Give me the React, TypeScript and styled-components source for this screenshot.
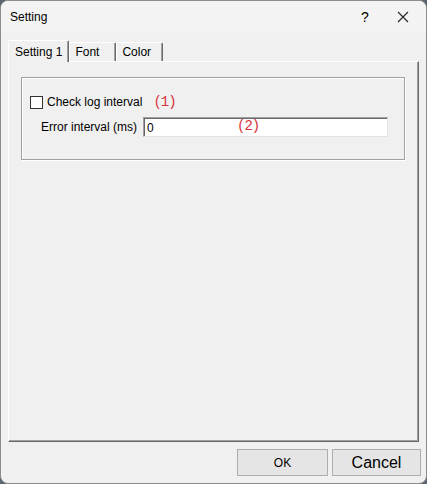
import styled, { createGlobalStyle } from 'styled-components'

const GlobalStyle = createGlobalStyle`
  html, body {
    margin: 0;
    padding: 0;
    background: #5c6470;
  }
  body {
    font-family: "Liberation Sans", Arial, sans-serif;
    font-size: 12px;
    color: #000;
  }
`

const Window = styled.div`
  box-sizing: border-box;
  width: 427px;
  height: 484px;
  border: 1px solid #8c8c8c;
  border-radius: 8px;
  background: #f0f0f0;
  display: flex;
  flex-direction: column;
  overflow: hidden;
`

const TitleBar = styled.div`
  height: 31px;
  display: flex;
  align-items: center;
  padding-left: 9px;
  background: #f3f3f3;
`

const Title = styled.div`
  flex: 1;
  font-size: 12px;
`

const TitleButton = styled.div<{ $w: number }>`
  width: ${p => p.$w}px;
  height: 31px;
  display: flex;
  align-items: center;
  justify-content: center;
  font-size: 14px;
`

const TabsRow = styled.div`
  margin: 8px 0 0 7px;
  height: 21px;
  display: flex;
  align-items: flex-end;
  position: relative;
  z-index: 1;
`

const Tab = styled.div<{ $active?: boolean }>`
  box-sizing: border-box;
  height: ${p => (p.$active ? 22 : 19)}px;
  margin-bottom: ${p => (p.$active ? -1 : 0)}px;
  padding: 0 ${p => (p.$active ? 6 : 5)}px;
  min-width: ${p => (p.$active ? 61 : 47)}px;
  display: flex;
  align-items: center;
  background: #f0f0f0;
  border-top: 1px solid #fff;
  border-left: 1px solid #fff;
  border-right: 1px solid #696969;
  border-radius: 2px 2px 0 0;
  box-shadow: inset -1px 0 0 #a0a0a0;
  font-size: 12px;
`

const Panel = styled.div`
  box-sizing: border-box;
  margin-left: 7px;
  width: 411px;
  height: 381px;
  padding: 15px 0 0 12px;
  border-top: 1px solid #fff;
  border-left: 1px solid #fff;
  border-right: 1px solid #696969;
  border-bottom: 1px solid #696969;
  box-shadow: inset -1px -1px 0 #a0a0a0;
`

const GroupBox = styled.div`
  box-sizing: border-box;
  width: 384px;
  height: 83px;
  border: 1px solid #a0a0a0;
  box-shadow: 1px 1px 0 #fff, inset 1px 1px 0 #fff;
  padding: 16px 0 0 8px;
`

const Row = styled.div<{ $indent?: number; $top?: number }>`
  display: flex;
  align-items: center;
  margin-left: ${p => p.$indent ?? 0}px;
  margin-top: ${p => p.$top ?? 0}px;
`

const CheckBox = styled.div`
  box-sizing: border-box;
  width: 13px;
  height: 13px;
  border: 1px solid #333;
  background: #fff;
  margin-right: 4px;
`

const Label = styled.span<{ $gap?: number }>`
  font-size: 12px;
  margin-right: ${p => p.$gap ?? 0}px;
  white-space: nowrap;
`

const Note = styled.span`
  font-family: "Liberation Mono", "DejaVu Sans Mono", monospace;
  font-size: 14px;
  letter-spacing: -1px;
  color: #d8323c;
`

const InputWrap = styled.div`
  position: relative;
`

const TextInput = styled.div`
  box-sizing: border-box;
  width: 245px;
  height: 20px;
  background: #fff;
  border-top: 1px solid #a0a0a0;
  border-left: 1px solid #a0a0a0;
  border-right: 1px solid #e3e3e3;
  border-bottom: 1px solid #e3e3e3;
  box-shadow: inset 1px 1px 0 #696969;
  padding: 1px 0 0 3px;
  display: flex;
  align-items: center;
  font-size: 12px;
`

const Overlay = styled(Note)`
  position: absolute;
  left: 94px;
  top: 1px;
`

const Footer = styled.div`
  display: flex;
  justify-content: flex-end;
  gap: 4px;
  padding: 7px 5px 0 0;
`

const Button = styled.div<{ $w: number; $size: number }>`
  box-sizing: border-box;
  width: ${p => p.$w}px;
  height: 27px;
  border: 1px solid #adadad;
  background: #e5e5e5;
  display: flex;
  align-items: center;
  justify-content: center;
  font-size: ${p => p.$size}px;
`

const App = () => {
  return (
    <Window>
      <GlobalStyle />
      <TitleBar>
        <Title>Setting</Title>
        <TitleButton $w={30}>?</TitleButton>
        <TitleButton $w={46}>
          <svg width="12" height="12" viewBox="0 0 12 12">
            <path d="M1 1 L11 11 M11 1 L1 11" stroke="#222" strokeWidth="1.1" fill="none" />
          </svg>
        </TitleButton>
      </TitleBar>

      <TabsRow>
        <Tab $active>Setting 1</Tab>
        <Tab>Font</Tab>
        <Tab>Color</Tab>
      </TabsRow>

      <Panel>
        <GroupBox>
          <Row>
            <CheckBox />
            <Label $gap={11}>Check log interval</Label>
            <Note>(1)</Note>
          </Row>
          <Row $indent={11} $top={7}>
            <Label $gap={6}>Error interval (ms)</Label>
            <InputWrap>
              <TextInput>0</TextInput>
              <Overlay>(2)</Overlay>
            </InputWrap>
          </Row>
        </GroupBox>
      </Panel>

      <Footer>
        <Button $w={91} $size={12}>OK</Button>
        <Button $w={89} $size={16}>Cancel</Button>
      </Footer>
    </Window>
  )
}

export default App
